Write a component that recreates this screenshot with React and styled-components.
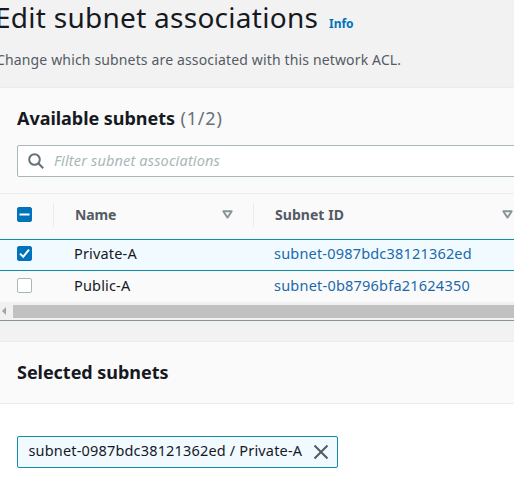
import React from 'react';
import styled, { createGlobalStyle } from 'styled-components';

const GlobalStyle = createGlobalStyle`
  * { box-sizing: border-box; }
  html, body { margin: 0; padding: 0; overflow: hidden; }
  body { background: #f2f3f3; font-family: "Noto Sans", "Open Sans", sans-serif; color: #16191f; }
`;

const Page = styled.main`
  width: 514px;
  height: 481px;
  overflow: hidden;
  background: #f2f2f2;
  white-space: nowrap;
`;

const PageHeader = styled.header`
  height: 87px;
  display: flex;
  flex-direction: column;
`;

const TitleRow = styled.div`
  display: flex;
  align-items: baseline;
  gap: 10px;
  height: 46px;
  margin: -1px 0 0 -5px;
`;

const Title = styled.h1`
  margin: 0;
  width: 324px;
  font-size: 28px;
  line-height: 36px;
  font-weight: 400;
  letter-spacing: 0.27px;
`;

const InfoLink = styled.a`
  color: #0073bb;
  font-size: 12px;
  font-weight: 700;
  letter-spacing: 0;
`;

const Description = styled.p`
  margin: 4px 0 0 -4px;
  font-size: 14px;
  line-height: 22px;
  letter-spacing: 0.15px;
  color: #545b64;
`;

const Panel = styled.section`
  border-top: 1px solid #eaeded;
  background: ${(p) => p.$background};
`;

const AvailableHeader = styled.div`
  height: 105px;
  padding: 19px 0 0 17px;
`;

const PanelTitle = styled.h2`
  margin: 0;
  font-size: 18px;
  line-height: 22px;
  font-weight: 700;
  letter-spacing: -0.04px;
`;

const Counter = styled.span`
  margin-left: 1px;
  font-weight: 400;
  letter-spacing: 0.8px;
  color: #687078;
`;

const SearchField = styled.div`
  display: flex;
  align-items: center;
  width: 520px;
  height: 32px;
  margin-top: 16px;
  padding: 0 0 3px 10px;
  gap: 10px;
  background: #fff;
  border: 1px solid #aab7b8;
  border-radius: 2px;
  color: #aab7b8;
  font-size: 14.5px;
  font-style: italic;
  letter-spacing: 0.15px;
`;

const SearchIcon = styled.svg`
  margin-top: 2px;
`;

const Row = styled.div`
  display: grid;
  grid-template-columns: 53px 200px 261px;
  align-items: center;
`;

const HeadRow = styled(Row)`
  height: 46px;
  border-top: 1px solid #eaeded;
  padding-bottom: 4px;
`;

const BodyRow = styled(Row)`
  height: ${(p) => (p.$selected ? 32 : 31)}px;
  padding-bottom: ${(p) => (p.$selected ? 3 : 2)}px;
  background: ${(p) => (p.$selected ? '#f1faff' : '#fafafa')};
  border-top: ${(p) => (p.$selected ? '1px solid #0f8dab' : '0')};
  border-bottom: ${(p) => (p.$selected ? '1px solid #0f8dab' : '0')};
`;

const HeadCell = styled.div`
  display: flex;
  align-items: center;
  justify-content: space-between;
  height: 24px;
  padding: 0 ${(p) => p.$end}px 0 21px;
  border-left: 1px solid #eaeded;
  font-size: 14px;
  font-weight: 700;
  letter-spacing: ${(p) => p.$spacing};
  color: #545b64;
`;

const CheckCell = styled.div`
  padding-left: 17px;
  display: flex;
`;

const Cell = styled.div`
  padding: 0 0 2px 21px;
  font-size: 14.5px;
  line-height: 20px;
  letter-spacing: ${(p) => p.$spacing};
  color: ${(p) => (p.$link ? '#1a69ab' : '#16191f')};
`;

const Box = styled.span`
  display: flex;
  width: 15px;
  height: 15px;
  border: 1px solid ${(p) => (p.$on ? '#0073bb' : '#aab7b8')};
  border-radius: 2px;
  background: ${(p) => (p.$on ? '#0073bb' : '#fff')};
`;

const Scrollbar = styled.div`
  display: flex;
  align-items: center;
  height: 19px;
  background: #f1f1f1;
  border-bottom: 1px solid #879596;
`;

const ScrollArrow = styled.svg`
  width: 13px;
  height: 8px;
  flex: none;
`;

const ScrollThumb = styled.div`
  flex: 1;
  height: 13px;
  margin-top: 1px;
  background: #c1c1c1;
`;

const SelectedPanel = styled(Panel)`
  margin-top: 20px;
  height: 140px;
`;

const SelectedHeader = styled.div`
  height: 62px;
  padding: 19px 0 0 17px;
  background: #fafafa;
  border-bottom: 1px solid #eaeded;
`;

const Token = styled.div`
  display: flex;
  align-items: center;
  justify-content: space-between;
  width: 321px;
  height: 32px;
  margin: 32px 0 0 17px;
  padding: 0 8px 4px 10.5px;
  background: #f1faff;
  border: 1px solid #0f8dab;
  border-radius: 2px;
  font-size: 14.5px;
  letter-spacing: 0.17px;
`;

const Dismiss = styled.svg`
  margin-top: 4px;
`;

function Checkbox({ state }) {
  return (
    <Box $on={state !== 'off'}>
      {state !== 'off' && (
        <svg width="13" height="13" viewBox="0 0 13 13" fill="none" stroke="#fff" strokeWidth="2">
          {state === 'mixed' ? <path d="M1.5 6.5h10" /> : <path d="M2 6.6 5.2 9.8 11 2.7" />}
        </svg>
      )}
    </Box>
  );
}

function SortIcon() {
  return (
    <svg width="11" height="9" viewBox="0 0 11 9" fill="none" stroke="#879596" strokeWidth="1.9" strokeLinejoin="round">
      <path d="M1.3 1.3h8.4L5.5 7.6z" />
    </svg>
  );
}

const subnets = [
  { name: 'Private-A', id: 'subnet-0987bdc38121362ed', selected: true, spacing: '0.19px' },
  { name: 'Public-A', id: 'subnet-0b8796bfa21624350', selected: false, spacing: '0.22px' },
];

export default function App() {
  return (
    <Page>
      <GlobalStyle />
      <PageHeader>
        <TitleRow>
          <Title>Edit subnet associations</Title>
          <InfoLink>Info</InfoLink>
        </TitleRow>
        <Description>Change which subnets are associated with this network ACL.</Description>
      </PageHeader>

      <Panel $background="#fafafa">
        <AvailableHeader>
          <PanelTitle>
            Available subnets <Counter>(1/2)</Counter>
          </PanelTitle>
          <SearchField>
            <SearchIcon width="16" height="16" viewBox="0 0 16 16" fill="none" stroke="#687078" strokeWidth="2">
              <circle cx="6.5" cy="6.5" r="5.3" />
              <path d="m10.3 10.3 4.9 4.9" />
            </SearchIcon>
            Filter subnet associations
          </SearchField>
        </AvailableHeader>
        <HeadRow>
          <CheckCell><Checkbox state="mixed" /></CheckCell>
          <HeadCell $end={20} $spacing="-0.1px">Name<SortIcon /></HeadCell>
          <HeadCell $end={1} $spacing="0.05px">Subnet ID<SortIcon /></HeadCell>
        </HeadRow>
        {subnets.map((s) => (
          <BodyRow key={s.id} $selected={s.selected}>
            <CheckCell><Checkbox state={s.selected ? 'on' : 'off'} /></CheckCell>
            <Cell $spacing="0.17px">{s.name}</Cell>
            <Cell $link $spacing={s.spacing}>{s.id}</Cell>
          </BodyRow>
        ))}
        <Scrollbar>
          <ScrollArrow viewBox="0 0 13 8"><path d="M6 0v8L2 4z" fill="#a3a3a3" /></ScrollArrow>
          <ScrollThumb />
        </Scrollbar>
      </Panel>

      <SelectedPanel $background="#fff">
        <SelectedHeader>
          <PanelTitle>Selected subnets</PanelTitle>
        </SelectedHeader>
        <Token>
          subnet-0987bdc38121362ed / Private-A
          <Dismiss width="16" height="16" viewBox="0 0 16 16" fill="none" stroke="#545b64" strokeWidth="2">
            <path d="m1.5 1.5 13 13M14.5 1.5l-13 13" />
          </Dismiss>
        </Token>
      </SelectedPanel>
    </Page>
  );
}
